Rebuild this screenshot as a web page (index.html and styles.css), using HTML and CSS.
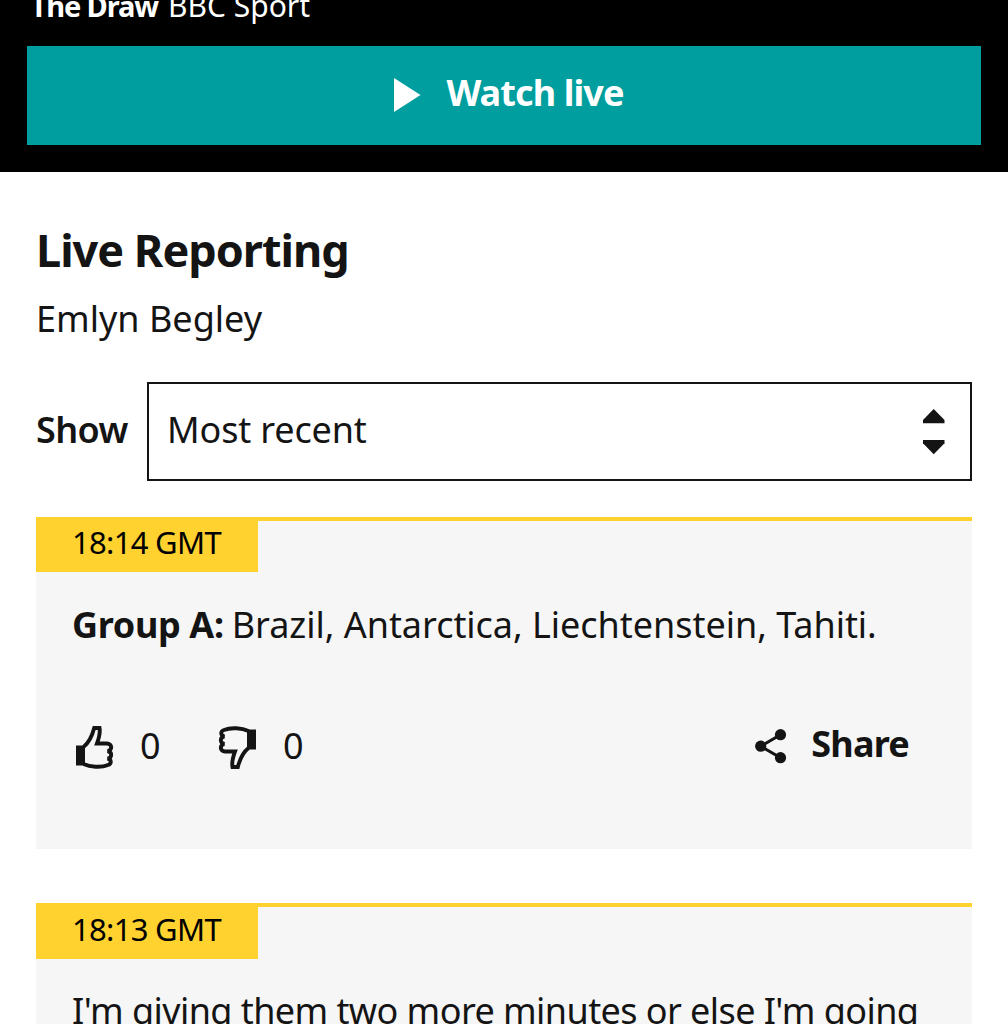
FILE: index.html
```html
<!DOCTYPE html>
<html lang="en">
<head>
<meta charset="utf-8">
<title>Live Reporting</title>
<link rel="stylesheet" href="styles.css">
</head>
<body>
<header class="media">
  <p class="media-title"><strong>The Draw</strong><span>BBC Sport</span></p>
  <a class="watch">
    <svg class="play" width="27" height="34" viewBox="0 0 27 34"><path d="M0 0L26.5 17L0 34Z" fill="#fff"/></svg>
    <span>Watch live</span>
  </a>
</header>
<main class="live">
  <h1 class="heading">Live Reporting</h1>
  <p class="author">Emlyn Begley</p>
  <div class="filter">
    <span class="filter-label">Show</span>
    <div class="select">
      <span>Most recent</span>
      <svg width="22" height="46" viewBox="0 0 22 46" fill="#141414"><path d="M10.7 0L21.5 11V14.3H0V11Z"/><path d="M0 31H21.5V34.3L10.7 45.3L0 34.3Z"/></svg>
    </div>
  </div>
  <article class="post">
    <time class="stamp">18:14 GMT</time>
    <p class="body"><strong>Group A:</strong><span class="teams">Brazil, Antarctica, Liechtenstein, Tahiti.</span></p>
    <div class="actions">
      <svg class="thumb" width="38" height="44" viewBox="0 0 38 44"><path d="M0 19.5H9V39.5H0Z" fill="#141414"/><path d="M7.5 21C12.5 17 16 10.5 18.2 2H23.5C24.5 7 23 12 21 17.5H31C36.5 17.5 36.5 24.5 31.5 25C36.5 26 36.2 32 31.5 32.5C36 33.5 35.5 38 32 39C25 42 14 41 7.5 38" fill="none" stroke="#141414" stroke-width="3.9"/></svg>
      <span class="count">0</span>
      <svg class="thumb" width="38" height="44" viewBox="0 0 38 44"><g transform="rotate(180 19 21.5)"><path d="M0 19.5H9V39.5H0Z" fill="#141414"/><path d="M7.5 21C12.5 17 16 10.5 18.2 2H23.5C24.5 7 23 12 21 17.5H31C36.5 17.5 36.5 24.5 31.5 25C36.5 26 36.2 32 31.5 32.5C36 33.5 35.5 38 32 39C25 42 14 41 7.5 38" fill="none" stroke="#141414" stroke-width="3.9"/></g></svg>
      <span class="count">0</span>
      <a class="share">
        <svg width="32" height="35" viewBox="0 0 32 35" fill="#141414"><path d="M25.5 5.7L5.7 17.2L25.5 28.7" fill="none" stroke="#141414" stroke-width="3"/><circle cx="25.5" cy="5.7" r="5.6"/><circle cx="5.7" cy="17.2" r="5.6"/><circle cx="25.5" cy="28.7" r="5.6"/></svg>
        <span>Share</span>
      </a>
    </div>
  </article>
  <article class="post">
    <time class="stamp stamp-tall">18:13 GMT</time>
    <p class="body long">I'm giving them two more minutes or else I'm going</p>
  </article>
</main>
</body>
</html>
```
FILE: styles.css
```css
* { box-sizing: border-box; }
html, body { height: 1024px; overflow: hidden; }
body {
  margin: 0;
  background: #fff;
  color: #141414;
  font: 36px/48px "Noto Sans", sans-serif;
  white-space: nowrap;
}
h1, p { margin: 0; }
svg { display: block; flex: none; }

.media {
  height: 172px;
  padding: 0 27px;
  background: #000;
  color: #fff;
  overflow: hidden;
}
.media-title {
  display: flex;
  align-items: baseline;
  gap: 10px;
  height: 46px;
  padding-left: 4px;
  margin-top: -14px;
  margin-bottom: 14px;
  font-size: 30px;
  line-height: 40px;
}
.media-title strong { font-size: 29px; letter-spacing: -1.1px; margin-left: -0.5px; }
.watch {
  display: flex;
  justify-content: center;
  align-items: center;
  gap: 25px;
  height: 99px;
  padding-left: 10px;
  background: #009e9e;
  font-weight: 700;
  letter-spacing: -0.9px;
}
.watch span { padding-bottom: 5px; }
.play { margin-bottom: 2px; }

.live { padding: 51px 36px 0; }
.heading {
  font-size: 45px;
  line-height: 54px;
  font-weight: 700;
  letter-spacing: -1px;
}
.author { margin-top: 18px; }
.filter {
  display: flex;
  align-items: center;
  height: 99px;
  margin: 39px 0 36px;
}
.filter-label {
  width: 111px;
  padding-bottom: 3px;
  font-weight: 600;
  letter-spacing: -0.6px;
}
.select {
  display: flex;
  flex: 1;
  align-items: center;
  justify-content: space-between;
  height: 99px;
  padding: 0 25px 0 18px;
  border: 2px solid #141414;
}
.select span { padding-bottom: 3px; letter-spacing: -0.15px; }

.post {
  height: 332px;
  margin-bottom: 54px;
  background: #f6f6f6;
  border-top: 4px solid #ffd230;
}
.stamp {
  display: block;
  width: 222px;
  height: 51px;
  padding-left: 36px;
  background: #ffd230;
  color: #000;
  font-size: 31px;
  line-height: 43px;
  letter-spacing: -0.7px;
}
.stamp-tall { height: 52px; line-height: 45px; }
.body { padding: 29px 36px 0; }
.body strong { margin-right: 8px; letter-spacing: -0.35px; }
.teams { letter-spacing: -0.03px; }
.long { padding-top: 28px; letter-spacing: -0.57px; }
.actions {
  display: flex;
  align-items: center;
  height: 60px;
  margin-top: 69px;
  padding: 0 63px 0 40px;
}
.count { width: 78px; margin-left: 26px; padding-bottom: 4px; }
.count + .thumb { margin-right: 1px; }
.share {
  display: flex;
  align-items: center;
  gap: 24px;
  margin-left: auto;
  font-weight: 700;
  letter-spacing: -0.8px;
}
.share span { padding-bottom: 8px; }
.share svg { margin-bottom: 3px; }
```
